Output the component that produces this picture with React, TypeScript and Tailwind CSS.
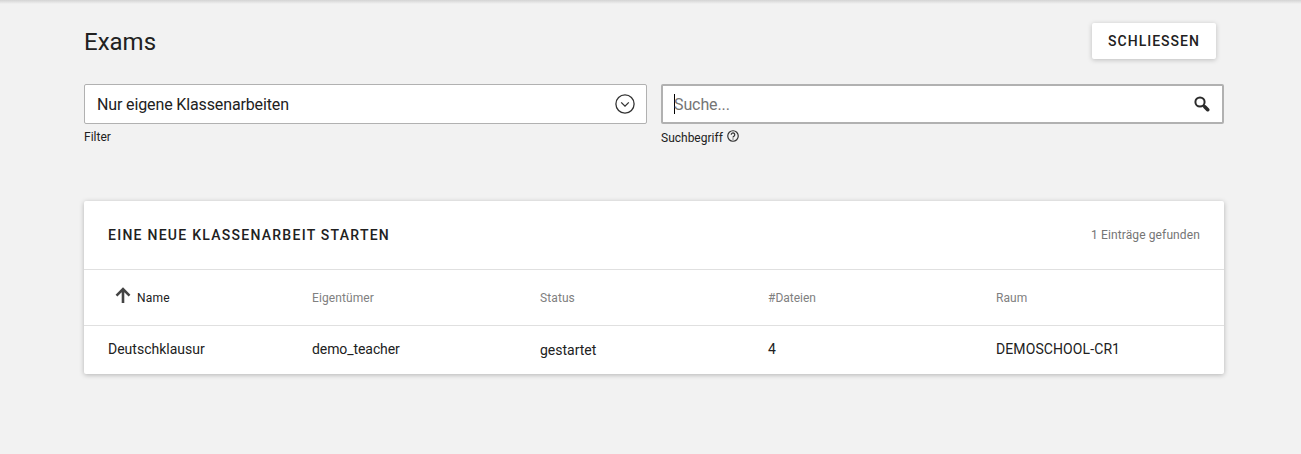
import React from "react";

const cols = "grid grid-cols-[204px_228px_228px_228px_1fr] pl-6";

export default function App() {
  return (
    <div className="h-[454px] overflow-hidden bg-[#f2f2f2] font-['Roboto',sans-serif] text-[#212121]">
      <div className="h-1 bg-linear-to-b from-[#d4d4d4] to-[#f2f2f2]" />
      <main className="ml-[84px] w-[1140px] pt-[19px]">
        <header className="flex h-9 items-center justify-between pr-2">
          <h1 className="pt-0.5 text-2xl leading-8">Exams</h1>
          <button className="h-9 w-[124px] rounded-xs bg-white text-sm font-medium tracking-[1px] shadow-[0_1px_5px_rgba(0,0,0,0.22)]">SCHLIESSEN</button>
        </header>
        <div className="mt-[25px] grid grid-cols-2 gap-[14px]">
          <div>
            <div className="flex h-10 items-center justify-between rounded-xs border border-[#b1b1b1] bg-white pr-[11px] pl-3 text-base">
              <span className="pt-0.5 tracking-[-0.13px]">Nur eigene Klassenarbeiten</span>
              <svg width="20" height="20" viewBox="0 0 20 20" fill="none" stroke="#333" strokeWidth="1.3"><circle cx="10" cy="10" r="9.1" /><path d="M6.2 8.4l3.8 3.7 3.8-3.7" /></svg>
            </div>
            <div className="mt-[5px] text-xs leading-4">Filter</div>
          </div>
          <div>
            <div className="flex h-10 items-center justify-between rounded-xs border-2 border-[#b1b1b1] bg-white pr-3 pl-[11px] text-base">
              <span className="flex items-center text-[#757575]"><i className="-mr-px h-5 w-px bg-black" /><span className="pt-0.5 tracking-[-0.1px]">Suche...</span></span>
              <svg width="16" height="16" viewBox="0 0 16 16" fill="none" stroke="#2b2b2b"><circle cx="6" cy="6" r="4.6" strokeWidth="2" /><path d="M9.4 9.4l1.4 1.4" strokeWidth="2" /><path d="M11 11l2.7 2.7" strokeWidth="3.6" strokeLinecap="round" /></svg>
            </div>
            <div className="mt-1 flex items-center gap-1 text-xs leading-4"><span className="pt-0.5 leading-4">Suchbegriff</span>
              <svg className="mb-0.5" width="12" height="12" viewBox="0 0 24 24" fill="none" stroke="#333" strokeWidth="2.4"><circle cx="12" cy="12" r="10.5" /><path d="M8.5 9.5a3.5 3.5 0 1 1 5.5 2.8c-1.3 1-2 1.4-2 2.7M12 17v2.2" /></svg>
            </div>
          </div>
        </div>
        <section className="mt-[55px] h-[173px] rounded-xs bg-white shadow-[0_1px_5px_rgba(0,0,0,0.26)]">
          <div className="flex h-[69px] items-center justify-between border-b border-[#e0e0e0] px-6">
            <h2 className="text-sm font-medium tracking-[1.26px]">EINE NEUE KLASSENARBEIT STARTEN</h2>
            <span className="text-xs tracking-[0.12px] text-[#757575]">1 Einträge gefunden</span>
          </div>
          <div className={cols + " h-14 items-center border-b border-[#e0e0e0] text-xs text-[#808080]"}>
            <div className="flex items-center gap-1.5 pl-[7px] tracking-[0.25px] text-[#212121]">
              <svg className="mb-[5px]" width="16" height="16" viewBox="0 0 16 16" fill="none" stroke="#444" strokeWidth="2.6"><path d="M8 16V2M1.5 8.7L8 2.2l6.5 6.5" /></svg>Name
            </div>
            <div className="tracking-[0.1px]">Eigentümer</div><div className="tracking-[0.1px]">Status</div><div>#Dateien</div><div className="tracking-[0.1px]">Raum</div>
          </div>
          <div className={cols + " h-[46px] items-center text-sm"}>
            <div>Deutschklausur</div><div className="tracking-[-0.08px]">demo_teacher</div><div className="pt-0.5">gestartet</div><div>4</div><div className="tracking-[0.1px]">DEMOSCHOOL-CR1</div>
          </div>
        </section>
      </main>
    </div>
  );
}
